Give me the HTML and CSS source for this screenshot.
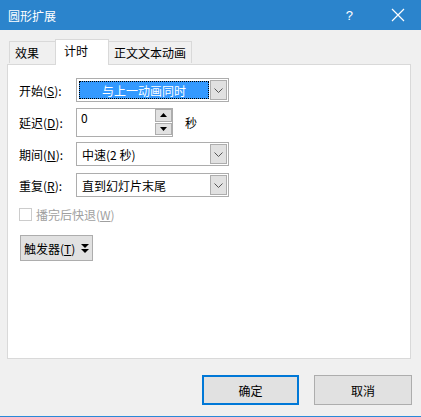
FILE: index.html
```html
<!DOCTYPE html>
<html lang="zh-CN">
<head>
  <meta charset="UTF-8">
  <title>圆形扩展</title>
  <link rel="stylesheet" href="styles.css">
</head>
<body>
  <div class="dialog">
    <div class="titlebar">
      <span class="title">圆形扩展</span>
      <span class="help">?</span>
      <svg class="close" width="14" height="14" viewBox="0 0 14 14">
        <path d="M1 1 L13 13 M13 1 L1 13" stroke="#fff" stroke-width="1.2" fill="none"/>
      </svg>
    </div>

    <div class="tabs">
      <div class="tab">效果</div>
      <div class="tab active">计时</div>
      <div class="tab">正文文本动画</div>
    </div>

    <div class="panel">
      <div class="row row-start">
        <label class="label">开始(<u>S</u>):</label>
        <div class="combo">
          <div class="combo-value focused"><span>与上一动画同时</span></div>
          <div class="combo-btn">
            <svg width="9" height="5" viewBox="0 0 9 5"><path d="M0.5 0.5 L4.5 4.5 L8.5 0.5" stroke="#555" fill="none"/></svg>
          </div>
        </div>
      </div>

      <div class="row row-delay">
        <label class="label">延迟(<u>D</u>):</label>
        <div class="spin">
          <div class="spin-value">0</div>
          <div class="spin-btns">
            <div class="spin-btn"><svg width="7" height="4" viewBox="0 0 7 4"><path d="M0 4 L3.5 0 L7 4 Z" fill="#000"/></svg></div>
            <div class="spin-btn"><svg width="7" height="4" viewBox="0 0 7 4"><path d="M0 0 L7 0 L3.5 4 Z" fill="#000"/></svg></div>
          </div>
        </div>
        <span class="unit">秒</span>
      </div>

      <div class="row row-period">
        <label class="label">期间(<u>N</u>):</label>
        <div class="combo">
          <div class="combo-value">中速(2 秒)</div>
          <div class="combo-btn">
            <svg width="9" height="5" viewBox="0 0 9 5"><path d="M0.5 0.5 L4.5 4.5 L8.5 0.5" stroke="#555" fill="none"/></svg>
          </div>
        </div>
      </div>

      <div class="row row-repeat">
        <label class="label">重复(<u>R</u>):</label>
        <div class="combo">
          <div class="combo-value">直到幻灯片末尾</div>
          <div class="combo-btn">
            <svg width="9" height="5" viewBox="0 0 9 5"><path d="M0.5 0.5 L4.5 4.5 L8.5 0.5" stroke="#555" fill="none"/></svg>
          </div>
        </div>
      </div>

      <div class="check-row">
        <span class="checkbox"></span>
        <span class="check-label">播完后快退(<u>W</u>)</span>
      </div>

      <div class="trigger">
        <span>触发器(<u>T</u>)</span>
        <svg width="8" height="9" viewBox="0 0 8 9"><path d="M0 0 H8 L4 4 Z M0 5 H8 L4 9 Z" fill="#000"/></svg>
      </div>
    </div>

    <div class="footer">
      <div class="btn btn-default">确定</div>
      <div class="btn">取消</div>
    </div>
  </div>
</body>
</html>
```

FILE: styles.css
```css
body {
  margin: 0;
  background: #f0f0f0;
  font-family: "Noto Sans CJK SC", "Noto Sans", sans-serif;
  font-size: 12px;
  color: #000;
}

.dialog {
  width: 421px;
  height: 417px;
  box-sizing: border-box;
  border-bottom: 1px solid #2b88d8;
  display: flex;
  flex-direction: column;
}

.titlebar {
  height: 30px;
  background: #2b84cc;
  color: #fff;
  display: flex;
  align-items: center;
  padding-left: 8px;
}

.title {
  font-size: 12px;
  flex: 1;
}

.help {
  font-family: "Liberation Sans", sans-serif;
  font-size: 13px;
  margin-right: 38px;
}

.close {
  margin-right: 16px;
}

.tabs {
  display: flex;
  align-items: flex-end;
  margin: 9px 0 0 9px;
  height: 25px;
  position: relative;
  z-index: 1;
}

.tab {
  height: 21px;
  border: 1px solid #d9d9d9;
  border-bottom: none;
  background: #f0f0f0;
  padding: 0 5px;
  display: flex;
  align-items: center;
  margin-bottom: 1px;
}

.tab:first-child {
  width: 35px;
}

.tab.active {
  height: 25px;
  width: 39px;
  background: #fff;
  margin-bottom: -1px;
  margin-left: -1px;
  margin-right: -1px;
  padding-left: 8px;
  align-items: flex-start;
  padding-top: 0;
  line-height: 22px;
}

.panel {
  margin-left: 7px;
  width: 404px;
  height: 295px;
  box-sizing: border-box;
  background: #fff;
  border: 1px solid #d9d9d9;
  padding: 13px 0 0 11px;
}

.row {
  display: flex;
  align-items: center;
}

.label {
  width: 57px;
}

.row-delay {
  margin-top: 6px;
}

.row-period {
  margin-top: 5px;
}

.row-repeat {
  margin-top: 7px;
}

.combo {
  width: 153px;
  height: 24px;
  box-sizing: border-box;
  border: 1px solid #adadad;
  display: flex;
  padding: 1px;
}

.combo-value {
  flex: 1;
  display: flex;
  align-items: center;
  padding-left: 4px;
}

.combo-value.focused {
  margin: 1px 1px 1px 1px;
  padding: 0;
  background: #3399ff;
  color: #fff;
  outline: 1px dotted #000;
  outline-offset: -1px;
  justify-content: center;
}

.combo-btn {
  width: 17px;
  box-sizing: border-box;
  border: 1px solid #adadad;
  background: #e1e1e1;
  display: flex;
  align-items: center;
  justify-content: center;
}

.spin {
  width: 97px;
  height: 29px;
  box-sizing: border-box;
  border: 1px solid #adadad;
  display: flex;
}

.spin-value {
  flex: 1;
  padding: 0 0 0 4px;
  line-height: 18px;
}

.spin-btns {
  display: flex;
  flex-direction: column;
  width: 17px;
}

.spin-btn {
  height: 13px;
  margin-bottom: 1px;
  box-sizing: border-box;
  border: 1px solid #adadad;
  background: #e1e1e1;
  display: flex;
  align-items: center;
  justify-content: center;
}

.unit {
  margin-left: 12px;
}

.check-row {
  display: flex;
  align-items: center;
  margin-top: 9px;
  color: #a0a0a0;
}

.checkbox {
  width: 13px;
  height: 13px;
  box-sizing: border-box;
  border: 1px solid #cccccc;
  margin-right: 4px;
}

.trigger {
  margin-top: 12px;
  margin-left: 1px;
  width: 73px;
  height: 26px;
  box-sizing: border-box;
  border: 1px solid #adadad;
  background: #e1e1e1;
  display: flex;
  align-items: center;
  padding-left: 3px;
  gap: 6px;
}

.footer {
  display: flex;
  justify-content: flex-end;
  gap: 15px;
  padding: 16px 9px 0 0;
}

.btn {
  width: 98px;
  height: 30px;
  box-sizing: border-box;
  border: 1px solid #adadad;
  background: #e1e1e1;
  display: flex;
  align-items: center;
  justify-content: center;
}

.btn-default {
  width: 97px;
  border: 2px solid #0078d7;
}
```
